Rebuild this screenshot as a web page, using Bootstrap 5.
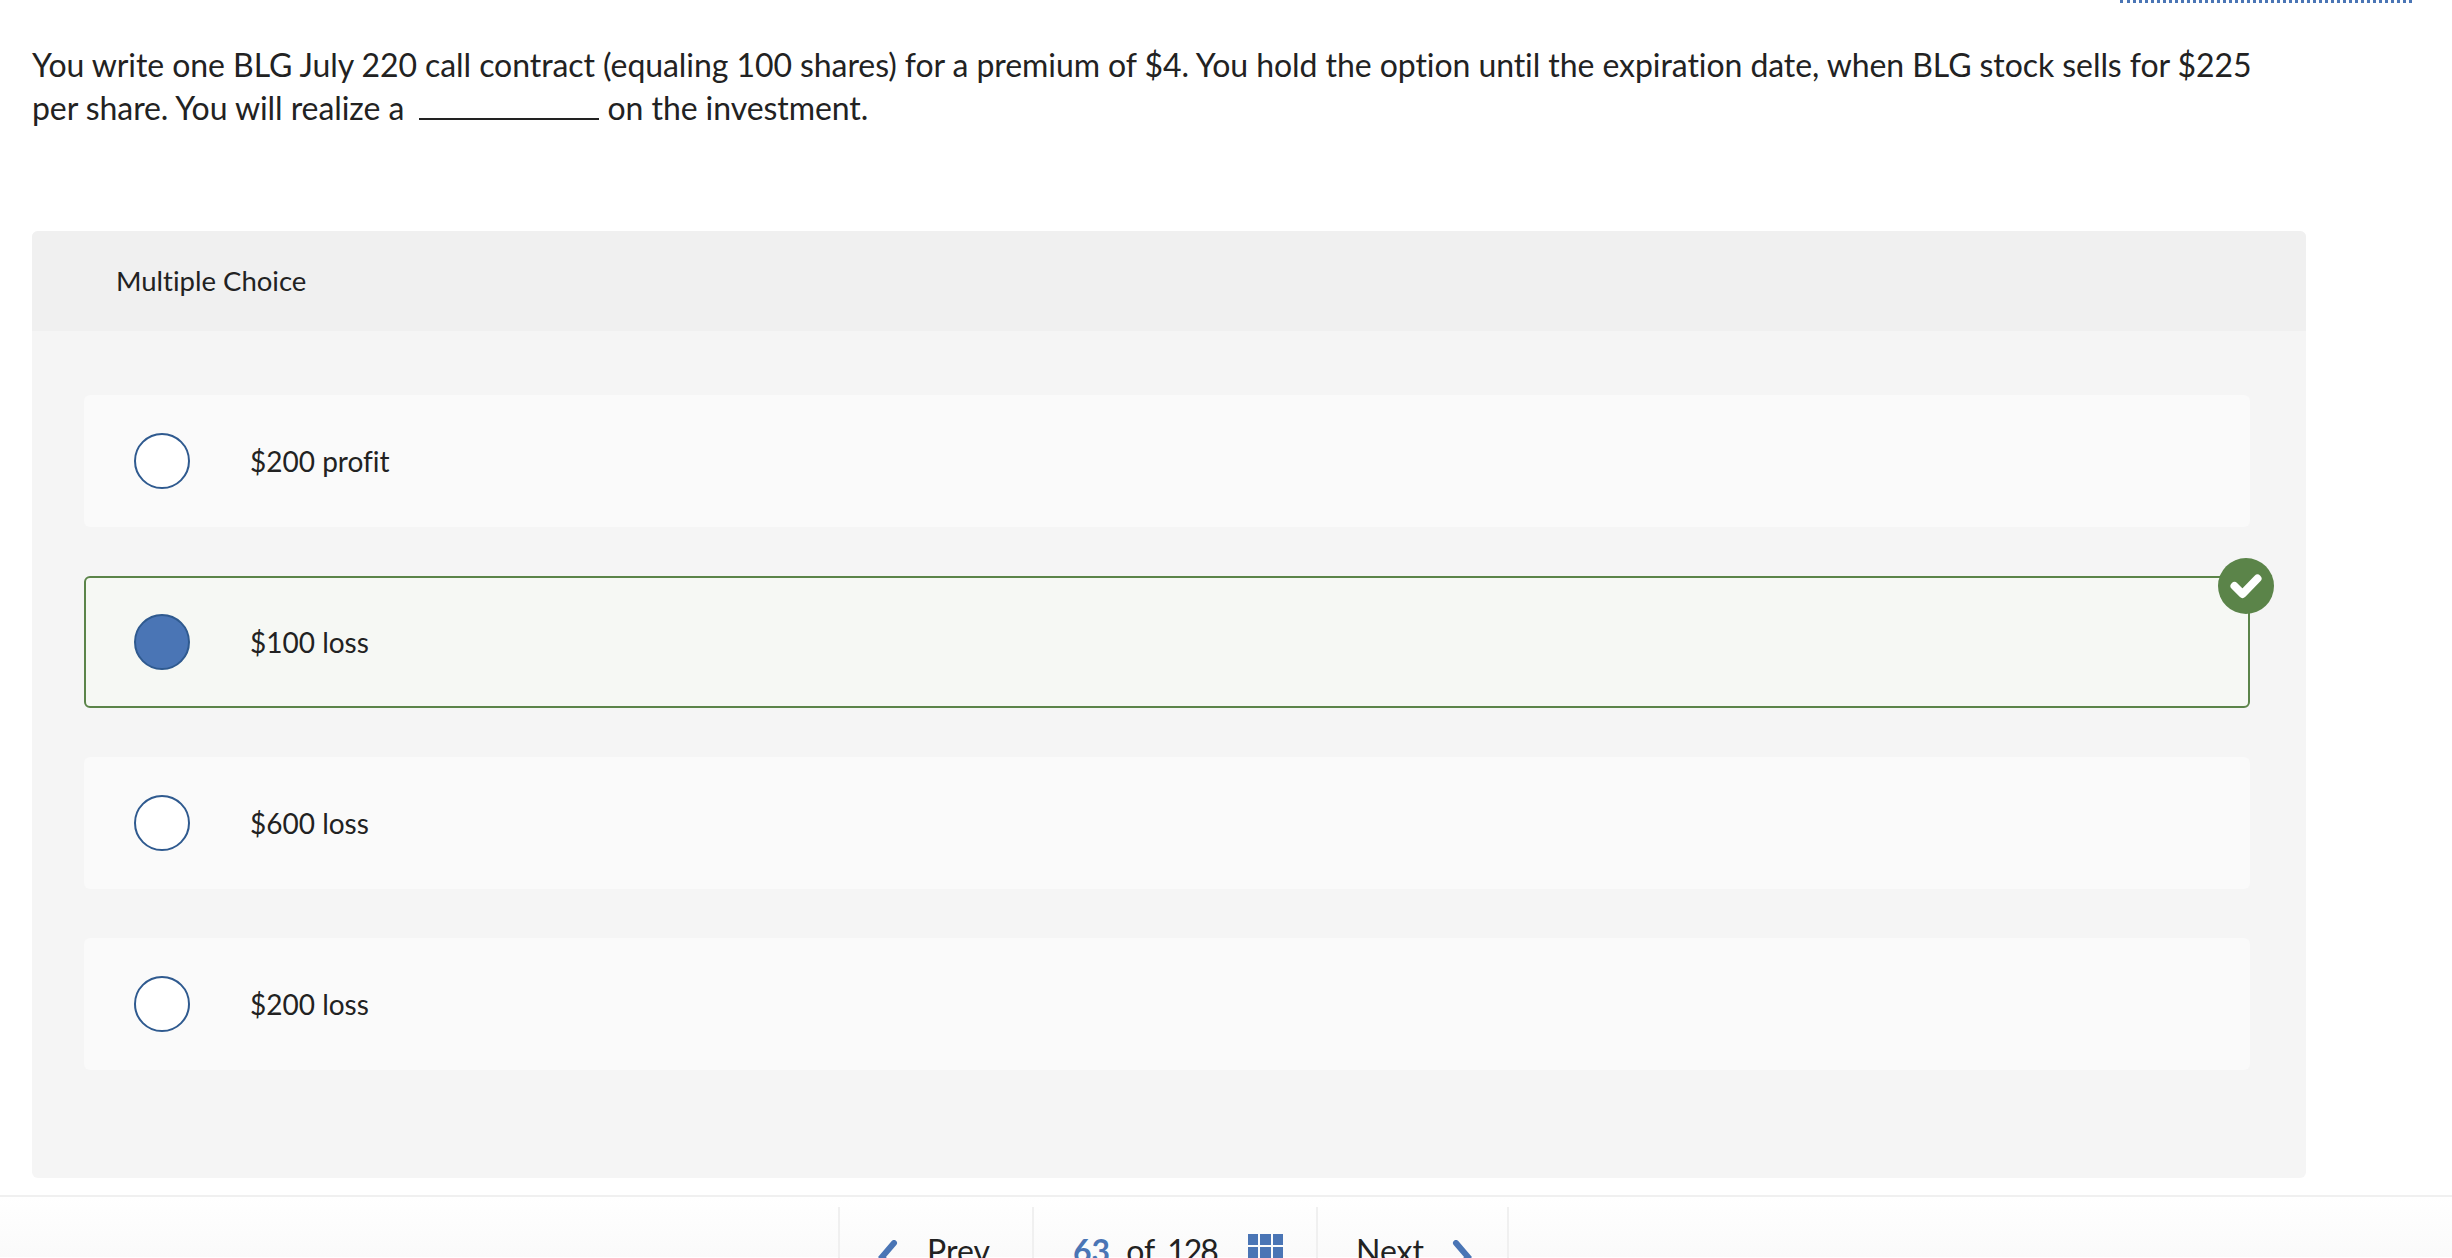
<!DOCTYPE html>
<html lang="en">
<head>
    <meta charset="UTF-8" />
    <title>Multiple Choice</title>
    <link href="https://cdn.jsdelivr.net/npm/bootstrap@5.3.0/dist/css/bootstrap.min.css" rel="stylesheet">
    <style>
        html, body { height: 100%; }
        body { font-family: "Lato", "Liberation Sans", sans-serif; font-variant-ligatures: none; color: #222; overflow: hidden; background: #fff; }
        .top-dots { width: 292px; margin-right: 40px; border-top: 3px dotted #4a75b5; height: 0; }
        .question { margin: 40px 0 0 32px; width: 2240px; font-size: 32px; line-height: 43px; letter-spacing: -0.07px; height: 188px; }
        .blank { display: inline-block; width: 180px; margin-left: 7px; border-bottom: 2px solid #222; }
        .mc-panel { margin-left: 32px; width: 2274px; height: 947px; background: #f5f5f5; border-radius: 6px; }
        .mc-head { height: 100px; padding-left: 84px; background: #f0f0f0; font-size: 27.5px; border-radius: 6px 6px 0 0; }
        .mc-body { padding: 64px 56px 0 52px; gap: 49px; }
        .choice { height: 132px; background: #fafafa; border-radius: 6px; padding-left: 48px; font-size: 28px; border: 2px solid transparent; }
        .choice-right { background: #f6f8f4; border-color: #5b8449; }
        .radio-dot { width: 56px; height: 56px; border-radius: 50%; background: #fff; border: 2px solid #2f5a8f; margin-right: 60px; flex-shrink: 0; }
        .radio-on { background: #4a75b5; }
        .check-badge { position: absolute; top: -20px; right: -26px; width: 56px; height: 56px; border-radius: 50%; background: #5b8449; }
        .foot-bar { margin-top: 17px; border-top: 2px solid #f0f0f0; padding-top: 10px; height: 62px; background: linear-gradient(#fff, #fafafa); font-size: 32px; }
        .foot-cell { height: 100px; border-left: 2px solid #f0f0f0; padding-top: 20px; }
        .foot-prev { width: 194px; padding-left: 38px; }
        .foot-count { width: 284px; padding-left: 39px; }
        .foot-next { width: 193px; padding-left: 38px; border-right: 2px solid #f0f0f0; }
        .count-now { color: #4a75b5; font-weight: 700; }
        .count-of { margin-left: 16px; }
        .count-all { margin-left: 12px; letter-spacing: -2px; }
        .grid-icon { display: grid; grid-template-columns: repeat(3, 10.5px); grid-auto-rows: 11px; gap: 2px; margin: 7px 0 0 31px; }
        .grid-icon i { background: #4a75b5; }
        .chev { margin-top: 13px; }
        .foot-prev span { margin-left: 5px; }
        .foot-next .chev { margin-left: 4px; }
    </style>
</head>
<body>
    <div class="d-flex justify-content-end"><div class="top-dots"></div></div>

    <p class="question">You write one BLG July 220 call contract (equaling 100 shares) for a premium of $4. You hold the option until the expiration date, when BLG stock sells for $225 per share. You will realize a <span class="blank"></span> on the investment.</p>

    <div class="mc-panel">
        <div class="mc-head d-flex align-items-center">Multiple Choice</div>
        <div class="mc-body d-flex flex-column">
            <div class="choice d-flex align-items-center"><span class="radio-dot"></span>$200 profit</div>
            <div class="choice choice-right d-flex align-items-center position-relative">
                <span class="radio-dot radio-on"></span>$100 loss
                <span class="check-badge d-flex align-items-center justify-content-center">
                    <svg width="32" height="26" viewBox="0 0 32 26"><path d="M4.5 13 L12.5 21 L27.5 5.5" fill="none" stroke="#fff" stroke-width="8" stroke-linecap="round" stroke-linejoin="round"/></svg>
                </span>
            </div>
            <div class="choice d-flex align-items-center"><span class="radio-dot"></span>$600 loss</div>
            <div class="choice d-flex align-items-center"><span class="radio-dot"></span>$200 loss</div>
        </div>
    </div>

    <div class="foot-bar d-flex">
        <div class="d-flex" style="margin-left:838px">
            <div class="foot-cell foot-prev d-flex gap-4">
                <svg class="chev" width="20" height="34" viewBox="0 0 20 34"><path d="M16 3 L4 17 L16 31" fill="none" stroke="#4a75b5" stroke-width="6" stroke-linecap="round"/></svg>
                <span>Prev</span>
            </div>
            <div class="foot-cell foot-count d-flex">
                <span class="count-now">63</span><span class="count-of">of</span><span class="count-all">128</span>
                <span class="grid-icon"><i></i><i></i><i></i><i></i><i></i><i></i><i></i><i></i><i></i></span>
            </div>
            <div class="foot-cell foot-next d-flex gap-4">
                <span>Next</span>
                <svg class="chev" width="20" height="34" viewBox="0 0 20 34"><path d="M4 3 L16 17 L4 31" fill="none" stroke="#4a75b5" stroke-width="6" stroke-linecap="round"/></svg>
            </div>
        </div>
    </div>

    <script src="https://cdn.jsdelivr.net/npm/bootstrap@5.3.0/dist/js/bootstrap.bundle.min.js"></script>
</body>
</html>
